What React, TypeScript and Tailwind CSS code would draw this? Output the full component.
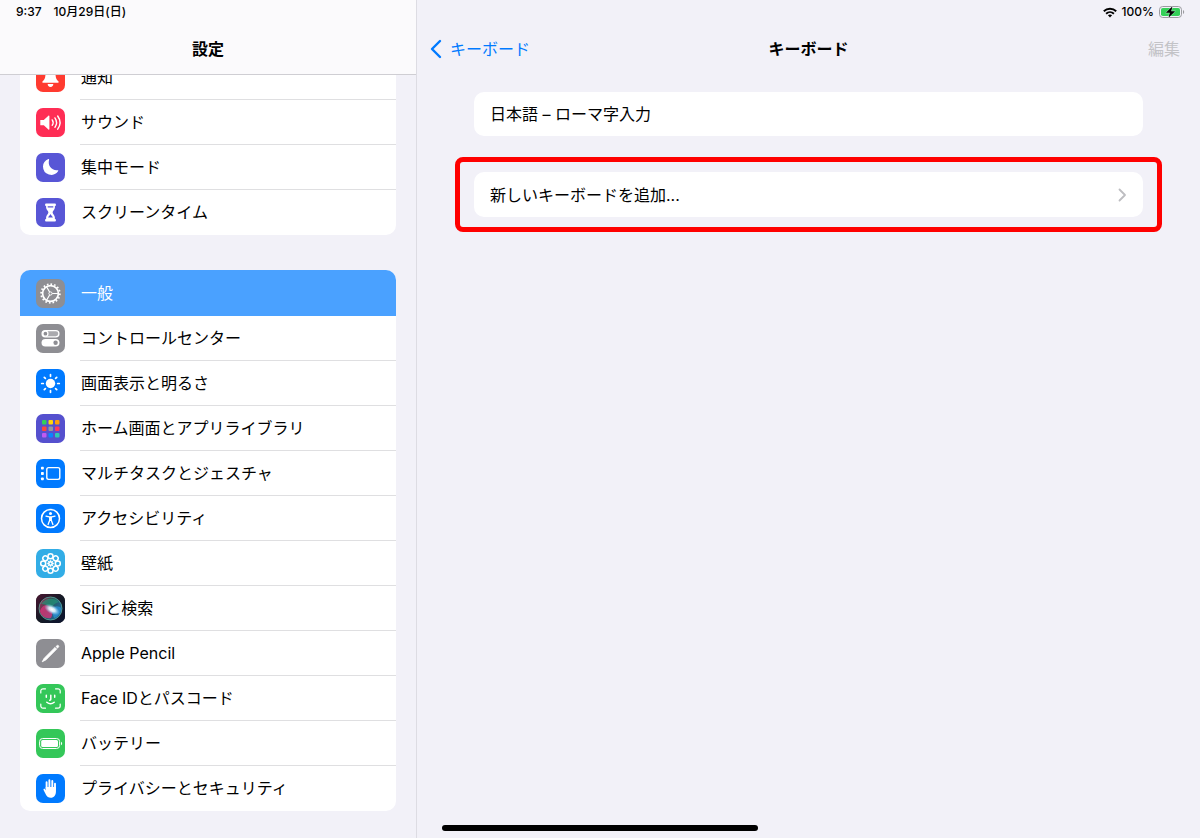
import type { ReactNode } from "react";

interface MenuItem {
  id: string;
  label: string;
  tile: string;
  icon: ReactNode;
  selected?: boolean;
}

const petals = [0, 45, 90, 135, 180, 225, 270, 315];

const BellIcon = () => (
  <path
    d="M14.5 5a5 5 0 0 1 5 5c0 5 .9 6.500 3 8.400.5.500.2 1.300-.5 1.300H7c-.700 0-1-.8-.500-1.300 2.100-1.900 3-3.400 3-8.400a5 5 0 0 1 5-5zM11.700 21.100h5.600a2.800 2.800 0 0 1-5.600 0z"
    fill="#fff"
  />
);

const SoundIcon = () => (
  <>
    <path d="M4.300 12h3.500l4.600-4.200c.5-.4 1-.1 1 .5v12.700c0 .6-.5.900-1 .5L7.800 17.300H4.300z" fill="#fff" />
    <g fill="none" stroke="#fff" strokeWidth="1.400" strokeLinecap="round">
      <path d="M16.200 11.900c1.200 1.700 1.200 3.700 0 5.400" />
      <path d="M18.900 9.900c2.100 3 2.100 6.400 0 9.400" />
      <path d="M21.700 8c3 4.200 3 9 0 13.200" />
    </g>
  </>
);

const MoonIcon = () => (
  <path
    d="M12.400 6.100c.4-.2.900.2.700.700-1.600 5.800 2.500 11 8.500 10.400.6-.1.900.4.600.900a8.300 8.300 0 0 1-15.200-4.600c0-3.300 2.100-6.100 5.400-7.400z"
    fill="#fff"
  />
);

const HourglassIcon = () => (
  <>
    <path
      d="M10.300 5.600h8.400c.7 0 1.200.4 1.200 1v.4c0 .6-.5 1-1 1v1.600c0 2.300-2.300 3.400-2.300 4.900s2.300 2.700 2.300 5v1.500c.5 0 1 .4 1 1v.4c0 .6-.5 1-1.200 1h-8.400c-.7 0-1.200-.4-1.200-1V22c0-.6.5-1 1-1v-1.500c0-2.300 2.300-3.500 2.300-5s-2.300-2.600-2.300-4.900V8c-.5 0-1-.4-1-1v-.4c0-.6.5-1 1.200-1z"
      fill="#fff"
    />
    <path d="M11.700 8.200h5.600v1.300H11.700zM14.500 15.800c.3 1.500 1.500 2.100 2.400 3.600h-4.800c.9-1.500 2.100-2.100 2.400-3.600z" fill="#5856d6" />
  </>
);

const GearIcon = () => (
  <g fill="none" stroke="#fff">
    <circle cx="14.5" cy="14.5" r="9.400" strokeWidth="1.700" pathLength="64" strokeDasharray="1.800 2.200" />
    <circle cx="14.5" cy="14.5" r="7.900" strokeWidth="1.700" />
    <circle cx="14.5" cy="14.5" r="1.600" strokeWidth="1" />
    <path d="M16.200 14.500h5.700M13.600 13l-2.900-5M13.600 16l-2.900 5" strokeWidth="1.200" />
  </g>
);

const TogglesIcon = () => (
  <>
    <rect x="6.100" y="6.600" width="16.800" height="6.200" rx="3.100" fill="#fff" fillOpacity="0.250" stroke="#fff" strokeWidth="1.300" />
    <circle cx="9.400" cy="9.700" r="2.500" fill="#8e8e93" stroke="#fff" strokeWidth="1.300" />
    <rect x="5.500" y="15" width="18" height="7.600" rx="3.800" fill="#fff" />
    <circle cx="19.600" cy="18.800" r="2.200" fill="#8e8e93" />
  </>
);

const SunIcon = () => (
  <>
    <circle cx="14.5" cy="14.500" r="4.700" fill="#fff" />
    <g stroke="#fff" strokeWidth="1.700" strokeLinecap="round">
      {petals.map((angle) => (
        <path key={angle} d="M14.500 7.300V5.700" transform={`rotate(${angle} 14.5 14.5)`} />
      ))}
    </g>
  </>
);

const homeColors = [
  "#30d158", "#ffd60a", "#ff9f0a",
  "#ff453a", "#98989d", "#ff375f",
  "#bf5af2", "#0a84ff", "#30c8b5",
];

const HomeIcon = () => (
  <>
    {homeColors.map((color, i) => (
      <rect key={color} x={6 + (i % 3) * 6.500} y={6 + Math.floor(i / 3) * 6.500} width="4.500" height="4.500" rx="1" fill={color} />
    ))}
  </>
);

const MultitaskIcon = () => (
  <>
    <rect x="10.800" y="8.600" width="13" height="11.800" rx="1.800" fill="none" stroke="#fff" strokeWidth="1.400" />
    <g fill="#fff">
      <rect x="5" y="7.700" width="2.800" height="2.800" rx="0.700" />
      <rect x="5" y="13.100" width="2.800" height="2.800" rx="0.700" />
      <rect x="5" y="18.500" width="2.800" height="2.800" rx="0.700" />
    </g>
  </>
);

const AccessibilityIcon = () => (
  <>
    <circle cx="14.500" cy="14.500" r="9" fill="none" stroke="#fff" strokeWidth="1.500" />
    <circle cx="14.500" cy="9.600" r="1.500" fill="#fff" />
    <path
      d="M10 12.200l3.200.7h2.600l3.200-.7M14.500 13v3.300M13.700 13v3.200l-1.600 4.300M15.300 13v3.200l1.600 4.300"
      fill="none"
      stroke="#fff"
      strokeWidth="1.300"
      strokeLinecap="round"
      strokeLinejoin="round"
    />
  </>
);

const FlowerIcon = () => (
  <g fill="none" stroke="#fff">
    {petals.map((angle) => (
      <g key={angle} transform={`rotate(${angle} 14.5 14.5)`}>
        <circle cx="14.500" cy="7.200" r="2.500" strokeWidth="1.500" />
        <path d="M14.500 11.200v2" strokeWidth="1.400" />
      </g>
    ))}
    <circle cx="14.500" cy="14.500" r="1.600" strokeWidth="1.200" />
  </g>
);

const SiriIcon = () => (
  <>
    <defs>
      <linearGradient id="siri-bg" x1="0" y1="0" x2="1" y2="1">
        <stop offset="0" stopColor="#4a1530" />
        <stop offset="0.5" stopColor="#151a26" />
        <stop offset="1" stopColor="#0b1430" />
      </linearGradient>
      <linearGradient id="siri-orb" x1="0" y1="0.2" x2="1" y2="0.7">
        <stop offset="0" stopColor="#d0245c" />
        <stop offset="0.4" stopColor="#2f6b66" />
        <stop offset="1" stopColor="#2487cf" />
      </linearGradient>
      <radialGradient id="siri-glow">
        <stop offset="0" stopColor="#fff" />
        <stop offset="0.4" stopColor="#e4f5ff" stopOpacity="0.9" />
        <stop offset="1" stopColor="#8fd8ff" stopOpacity="0" />
      </radialGradient>
    </defs>
    <rect width="29" height="29" fill="url(#siri-bg)" />
    <circle cx="14.500" cy="14.500" r="11.500" fill="url(#siri-orb)" fillOpacity="0.750" stroke="#58a99b" strokeWidth="0.800" />
    <path d="M4 17c2-6 6-7 11-4 2 3 2 8 0 11-6 1-10-2-11-7z" fill="#ee2f7c" fillOpacity="0.700" />
    <path d="M5 10c4-6 13-7 18-2-4 1-6 3-8 6-3-3-6-4-10-4z" fill="#1f9c7c" fillOpacity="0.600" />
    <path d="M15 15c4-4 8-3 10-1 0 5-3 9-7 10z" fill="#2c9dea" fillOpacity="0.600" />
    <ellipse cx="16" cy="15.500" rx="8.500" ry="4.500" transform="rotate(28 16 15.500)" fill="url(#siri-glow)" />
  </>
);

const PencilIcon = () => (
  <>
    <path d="M6.200 22.800l2-3.600L19 8.400l1.700 1.700L9.900 20.900z" fill="#fff" stroke="#fff" strokeWidth="0.800" strokeLinejoin="round" />
    <path d="M19.900 7.500l.9-.9a1.200 1.200 0 0 1 1.700 1.700l-.9.900z" fill="#fff" stroke="#fff" strokeWidth="0.500" />
  </>
);

const FaceIcon = () => (
  <g fill="none" stroke="#fff" strokeWidth="1.200" strokeLinecap="round">
    <path d="M4.800 9V7a2.200 2.200 0 0 1 2.200-2.200h2.500M19.500 4.800H22A2.200 2.200 0 0 1 24.200 7v2M24.200 20v2a2.200 2.200 0 0 1-2.200 2.200h-2.500M9.500 24.200H7A2.200 2.200 0 0 1 4.800 22v-2" />
    <path d="M10.300 11.200v2M18.700 11.200v2M14.800 11.200v4.100c0 .6-.3.900-1.100.9M10.800 18.200c2.200 1.900 5.200 1.900 7.400 0" strokeWidth="1.500" />
  </g>
);

const BatteryIcon = () => (
  <>
    <rect x="3.600" y="9.500" width="20" height="10" rx="3" fill="none" stroke="#fff" strokeWidth="1" />
    <rect x="5.200" y="11.100" width="16.800" height="6.800" rx="1.500" fill="#fff" />
    <path d="M25 12.800c1.500.5 1.500 2.900 0 3.400z" fill="#fff" />
  </>
);

const HandIcon = () => (
  <g stroke="#fff" strokeLinecap="round" fill="none">
    <path d="M10.600 15V8.200M13.400 14V6.200M16.300 14V7M19 15V9.800" strokeWidth="1.900" />
    <path
      d="M9.650 13h10.300v4.300c0 4-1.900 6.500-5.200 6.500-2.300 0-3.800-1-4.900-3.200l-2.300-4.700c-.4-.9.900-1.600 1.500-.8l1 1.300z"
      fill="#fff"
      stroke="none"
    />
  </g>
);

const soundGroup: MenuItem[] = [
  { id: "notifications", label: "通知", tile: "bg-[#ff3b30]", icon: <BellIcon /> },
  { id: "sound", label: "サウンド", tile: "bg-[#ff2d55]", icon: <SoundIcon /> },
  { id: "focus", label: "集中モード", tile: "bg-[#5856d6]", icon: <MoonIcon /> },
  { id: "screentime", label: "スクリーンタイム", tile: "bg-[#5856d6]", icon: <HourglassIcon /> },
];

const generalGroup: MenuItem[] = [
  { id: "general", label: "一般", tile: "bg-[#8e8e93]", icon: <GearIcon />, selected: true },
  { id: "control", label: "コントロールセンター", tile: "bg-[#8e8e93]", icon: <TogglesIcon /> },
  { id: "display", label: "画面表示と明るさ", tile: "bg-[#007aff]", icon: <SunIcon /> },
  { id: "home", label: "ホーム画面とアプリライブラリ", tile: "bg-[#5550ce]", icon: <HomeIcon /> },
  { id: "multitask", label: "マルチタスクとジェスチャ", tile: "bg-[#007aff]", icon: <MultitaskIcon /> },
  { id: "accessibility", label: "アクセシビリティ", tile: "bg-[#007aff]", icon: <AccessibilityIcon /> },
  { id: "wallpaper", label: "壁紙", tile: "bg-[#32ade6]", icon: <FlowerIcon /> },
  { id: "siri", label: "Siriと検索", tile: "bg-black", icon: <SiriIcon /> },
  { id: "pencil", label: "Apple Pencil", tile: "bg-[#8e8e93]", icon: <PencilIcon /> },
  { id: "faceid", label: "Face IDとパスコード", tile: "bg-[#34c759]", icon: <FaceIcon /> },
  { id: "battery", label: "バッテリー", tile: "bg-[#34c759]", icon: <BatteryIcon /> },
  { id: "privacy", label: "プライバシーとセキュリティ", tile: "bg-[#007aff]", icon: <HandIcon /> },
];

const MenuGroup = ({ items }: { items: MenuItem[] }) => (
  <ul className="shrink-0 overflow-hidden rounded-[10px] bg-white">
    {items.map((item, i) => (
      <li key={item.id}>
        <button
          type="button"
          className={`flex w-full items-center gap-[15px] pl-4 text-left ${
            item.selected ? "h-[46px] bg-[#4aa1ff] text-white" : "h-[45px]"
          }`}
        >
          <span className={`block size-[29px] shrink-0 overflow-hidden rounded-[7px] ${item.tile}`}>
            <svg viewBox="0 0 29 29" className="block size-full" aria-hidden="true">
              {item.icon}
            </svg>
          </span>
          <span
            className={`flex h-full flex-1 items-center border-b pl-px ${
              item.selected || i === items.length - 1 ? "border-transparent" : "border-[#dfdfe1]"
            }`}
          >
            {item.label}
          </span>
        </button>
      </li>
    ))}
  </ul>
);

const App = () => {
  return (
    <div className="relative flex h-screen overflow-hidden bg-[#f2f1f8] font-['Inter','Noto_Sans_CJK_JP',sans-serif] text-base text-black" lang="ja">
      <aside className="flex w-[417px] shrink-0 flex-col border-r border-[#dddce3]">
        <header className="shrink-0 border-b border-[#cfced3] bg-[#fbfafc]">
          <div className="flex h-6 items-center gap-3 pl-4 text-xs font-medium">
            <span>9:37</span>
            <span>10月29日(日)</span>
          </div>
          <h1 className="flex h-[50px] items-center justify-center font-bold">設定</h1>
        </header>
        {/* list is scrolled to its end, the first row runs under the header */}
        <nav className="flex min-h-0 flex-1 flex-col justify-end gap-[35px] overflow-hidden px-5 pb-[27px]">
          <MenuGroup items={soundGroup} />
          <MenuGroup items={generalGroup} />
        </nav>
      </aside>

      <main className="flex min-w-0 flex-1 flex-col">
        <div className="flex h-6 items-center justify-end gap-[5px] pr-[15px] text-xs font-medium">
          <svg viewBox="0 0 14 11" className="h-[11px] w-[14px]" aria-hidden="true">
            <g fill="none" stroke="#000" strokeWidth="1.900">
              <path d="M.8 4.200c3.500-3.300 8.900-3.300 12.400 0" />
              <path d="M3.100 6.700c2.200-2.100 5.600-2.100 7.800 0" />
            </g>
            <path d="M4.900 8.300c1.200-1 3-1 4.200 0L7 10.500z" fill="#000" />
          </svg>
          <span>100%</span>
          <svg viewBox="0 0 26 12" className="h-3 w-[26px]" aria-hidden="true">
            <rect x="0.500" y="0.500" width="22" height="11" rx="3.200" fill="none" stroke="#9b9ba0" />
            <rect x="2" y="2" width="19" height="8" rx="1.800" fill="#34d058" />
            <path d="M24 4c1.600.6 1.600 3.400 0 4z" fill="#9b9ba0" />
            <path d="M13.500.3L6.800 6.800h4L9.500 11.700l6.700-6.500h-4z" fill="#000" stroke="#f2f1f8" strokeWidth="0.700" paintOrder="stroke" />
          </svg>
        </div>
        <header className="grid h-[50px] grid-cols-3 items-center px-3">
          <button type="button" className="flex items-center gap-2 justify-self-start text-[#007aff]">
            <svg viewBox="0 0 13 20" className="h-5 w-[13px]" aria-hidden="true">
              <path d="M11 2L3 10l8 8" fill="none" stroke="#007aff" strokeWidth="2.400" strokeLinecap="round" strokeLinejoin="round" />
            </svg>
            キーボード
          </button>
          <h2 className="justify-self-center font-bold">キーボード</h2>
          <button type="button" disabled className="justify-self-end px-2 text-[#c3c3c7]">
            編集
          </button>
        </header>

        <div className="flex flex-col gap-[21px] px-[38px] pt-[18px]">
          <div className="mx-[19px] flex h-11 items-center rounded-[10px] bg-white px-4">日本語 – ローマ字入力</div>
          <div className="rounded-lg border-5 border-[#ff0000] px-[14px] py-[10px]">
            <button type="button" className="flex h-[45px] w-full items-center justify-between rounded-[10px] bg-white px-4 text-left">
              新しいキーボードを追加...
              <svg viewBox="0 0 9 14" className="h-[14px] w-[9px]" aria-hidden="true">
                <path d="M1.500 1.500L7 7l-5.500 5.500" fill="none" stroke="#bdbdc1" strokeWidth="1.800" strokeLinecap="round" strokeLinejoin="round" />
              </svg>
            </button>
          </div>
        </div>
      </main>

      <div className="absolute bottom-[7px] left-1/2 h-1.5 w-[316px] -translate-x-1/2 rounded-full bg-black" />
    </div>
  );
};

export default App;
